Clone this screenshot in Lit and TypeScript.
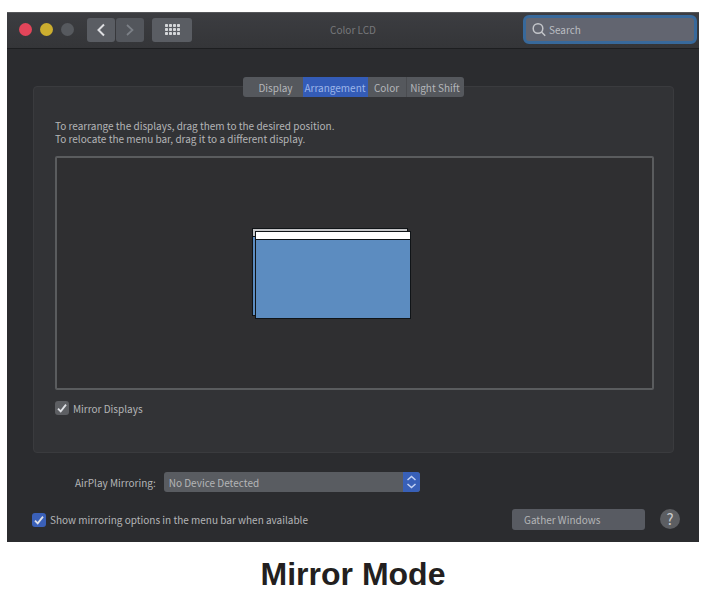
import { LitElement, html, css, svg } from "lit";
import { customElement, state } from "lit/decorators.js";
import { classMap } from "lit/directives/class-map.js";

const TABS = [
  { name: "Display", cls: "display" },
  { name: "Arrangement", cls: "arrangement" },
  { name: "Color", cls: "color" },
  { name: "Night Shift", cls: "night" },
];

@customElement("app-root")
export class AppRoot extends LitElement {
  @state() private tab = "Arrangement";

  static styles = css`
    :host {
      display: block;
      padding: 12px 13px 0 7px;
      background: #fff;
      font: 10px/13px "Noto Sans CJK SC", "Noto Sans", sans-serif;
      color: #b4b5b7;
    }
    * {
      box-sizing: border-box;
    }
    button,
    input,
    select {
      font: inherit;
      color: inherit;
      margin: 0;
      border: 0;
      padding: 0;
      outline: none;
      appearance: none;
    }
    .window {
      background: #2b2c2f;
      border-top: 1px solid #56575a;
      padding-bottom: 12px;
    }
    .titlebar {
      display: grid;
      grid-template-columns: 1fr auto 1fr;
      align-items: center;
      height: 36px;
      padding: 0 2px 2px;
      background: linear-gradient(#3c3d41, #343538);
      border-bottom: 1px solid #1d1e20;
    }
    .left {
      display: flex;
      align-items: center;
      padding-left: 10px;
    }
    .lights {
      display: flex;
      gap: 8px;
      margin-right: 13px;
    }
    .light {
      width: 13px;
      height: 13px;
      border-radius: 50%;
      background: #56595e;
    }
    .close {
      background: #e3455a;
    }
    .minimise {
      background: #ccae2f;
    }
    .tool {
      display: grid;
      place-items: center;
      width: 28px;
      height: 24px;
      border-radius: 3px;
      background: #5a5d63;
      margin-right: 1px;
    }
    .forward {
      background: #53565c;
    }
    .all {
      width: 40px;
      margin-left: 7px;
    }
    .title {
      margin: 0;
      font: inherit;
      color: #77787b;
    }
    .search {
      justify-self: end;
      display: flex;
      align-items: center;
      gap: 3px;
      width: 174px;
      height: 29px;
      padding-left: 6px;
      border: 3px solid #38699b;
      border-radius: 6px;
      background: #626570;
      color: #c3c5ca;
    }
    .search input {
      flex: 1;
      min-width: 0;
      background: none;
    }
    .search input::placeholder {
      color: #bbbdc2;
      opacity: 1;
    }
    .tabs {
      position: relative;
      display: flex;
      width: 221px;
      height: 20px;
      margin: 28px auto -11px;
      border-radius: 3px;
      overflow: hidden;
      background: #55585d;
    }
    .tab {
      background: none;
      color: #b4b6ba;
      text-align: center;
      white-space: nowrap;
    }
    .display {
      width: 60px;
      padding-left: 6px;
    }
    .arrangement {
      width: 65px;
    }
    .color {
      width: 38px;
    }
    .night {
      flex: 1;
      border-left: 1px solid #4a4c50;
    }
    .selected {
      background: #345cb7;
      color: #9db6ea;
    }
    .panel {
      margin: 0 25px 0 26px;
      padding: 32px 19px 37px 21px;
      border: 1px solid #3a3b3e;
      border-radius: 4px;
      background: #323336;
    }
    .hint {
      margin: 0 0 11px;
    }
    .stage {
      position: relative;
      height: 234px;
      border: 2px solid #5a5c5e;
      border-radius: 2px;
      background: #2f2f31;
    }
    .screen {
      position: absolute;
      width: 156px;
      height: 88px;
      border: 1px solid #101417;
      background: #5c8cc0;
    }
    .back-screen {
      left: 195px;
      top: 70px;
    }
    .front-screen {
      left: 198px;
      top: 73px;
    }
    .menubar {
      height: 8px;
      background: #fff;
      border-bottom: 1px solid #101417;
    }
    .back-screen .menubar {
      background: #c4c5c7;
    }
    .check {
      display: flex;
      align-items: center;
      gap: 4px;
    }
    .box {
      display: grid;
    }
    .box > * {
      grid-area: 1 / 1;
    }
    .box input {
      width: 14px;
      height: 14px;
      border-radius: 3px;
      background: #5d5f63;
    }
    .box svg {
      pointer-events: none;
      visibility: hidden;
    }
    .box input:checked + svg {
      visibility: visible;
    }
    .box .blue {
      background: #3a60b8;
    }
    .mirror {
      margin-top: 11px;
    }
    .airplay {
      display: flex;
      align-items: center;
      gap: 8px;
      margin: 19px 0 0 68px;
    }
    .picker {
      display: grid;
      width: 256px;
    }
    .picker > * {
      grid-area: 1 / 1;
    }
    .picker select {
      height: 20px;
      padding: 0 24px 0 5px;
      border-radius: 3px;
      background: #595c61;
    }
    .arrows {
      justify-self: end;
      width: 17px;
      height: 20px;
      border-radius: 0 3px 3px 0;
      background: #3860b8;
      pointer-events: none;
    }
    .footer {
      display: flex;
      align-items: center;
      margin: 17px 19px 0 25px;
    }
    .gather {
      width: 133px;
      height: 21px;
      margin-left: auto;
      padding-left: 12px;
      border-radius: 3px;
      background: #585b62;
      text-align: left;
    }
    .help {
      width: 20px;
      height: 20px;
      margin-left: 15px;
      align-self: flex-start;
      border-radius: 50%;
      background: #5c5e62;
      color: #c9cacc;
      font-size: 15px;
      line-height: 20px;
    }
    .caption {
      margin: 14px 0 0;
      text-align: center;
      font: bold 32px/36px "Liberation Sans", Arial, sans-serif;
      color: #231f20;
    }
  `;

  private tick() {
    return html`<svg width="14" height="14" viewBox="0 0 14 14" fill="none" stroke="#dfe1e6" stroke-width="1.8" aria-hidden="true">
      <path d="M3 7.6 5.7 10.4 11 3.6" />
    </svg>`;
  }

  private dots() {
    return [0, 1, 2].map((r) =>
      [0, 1, 2, 3].map((c) => svg`<rect x=${c * 4 + 1} y=${r * 4 + 1} width="3" height="3" rx="0.7" />`)
    );
  }

  render() {
    return html`
      <main class="window">
        <header class="titlebar">
          <div class="left">
            <div class="lights">
              <button class="light close" aria-label="Close"></button>
              <button class="light minimise" aria-label="Minimise"></button>
              <button class="light" aria-label="Zoom" disabled></button>
            </div>
            <button class="tool" aria-label="Back">
              <svg width="10" height="14" viewBox="0 0 10 14" fill="none" stroke="#dddee1" stroke-width="2"><path d="M8 1.5 2.5 7 8 12.5" /></svg>
            </button>
            <button class="tool forward" aria-label="Forward">
              <svg width="10" height="14" viewBox="0 0 10 14" fill="none" stroke="#7c8087" stroke-width="1.7"><path d="M2 2 7.5 7 2 12" /></svg>
            </button>
            <button class="tool all" aria-label="Show all">
              <svg width="17" height="13" viewBox="0 0 17 13" fill="#d5d7da">${this.dots()}</svg>
            </button>
          </div>
          <h1 class="title">Color LCD</h1>
          <label class="search">
            <svg width="14" height="15" viewBox="0 0 14 15" fill="none" stroke="currentColor" stroke-width="1.5" aria-hidden="true">
              <circle cx="6" cy="6.5" r="4.8" /><path d="m9.5 10 3.7 3.8" />
            </svg>
            <input type="search" placeholder="Search" aria-label="Search" />
          </label>
        </header>

        <nav class="tabs" role="tablist">
          ${TABS.map(
            (t) => html`<button
              role="tab"
              aria-selected=${t.name === this.tab}
              class=${classMap({ tab: true, [t.cls]: true, selected: t.name === this.tab })}
              @click=${() => (this.tab = t.name)}
            >${t.name}</button>`
          )}
        </nav>

        <section class="panel">
          <p class="hint">
            To rearrange the displays, drag them to the desired position.<br />
            To relocate the menu bar, drag it to a different display.
          </p>
          <div class="stage">
            <div class="screen back-screen"><div class="menubar"></div></div>
            <div class="screen front-screen"><div class="menubar"></div></div>
          </div>
          <label class="check mirror">
            <span class="box"><input type="checkbox" checked />${this.tick()}</span>
            Mirror Displays
          </label>
        </section>

        <div class="airplay">
          <label for="device">AirPlay Mirroring:</label>
          <div class="picker">
            <select id="device"><option>No Device Detected</option></select>
            <svg class="arrows" viewBox="0 0 17 20" fill="none" stroke="#c3d2f3" stroke-width="1.5" aria-hidden="true">
              <path d="M4.5 8 8.5 4.5 12.5 8M4.5 12 8.5 15.5 12.5 12" />
            </svg>
          </div>
        </div>

        <footer class="footer">
          <label class="check">
            <span class="box"><input class="blue" type="checkbox" checked />${this.tick()}</span>
            Show mirroring options in the menu bar when available
          </label>
          <button class="gather">Gather Windows</button>
          <button class="help" aria-label="Help">?</button>
        </footer>
      </main>
      <h2 class="caption">Mirror Mode</h2>
    `;
  }
}
